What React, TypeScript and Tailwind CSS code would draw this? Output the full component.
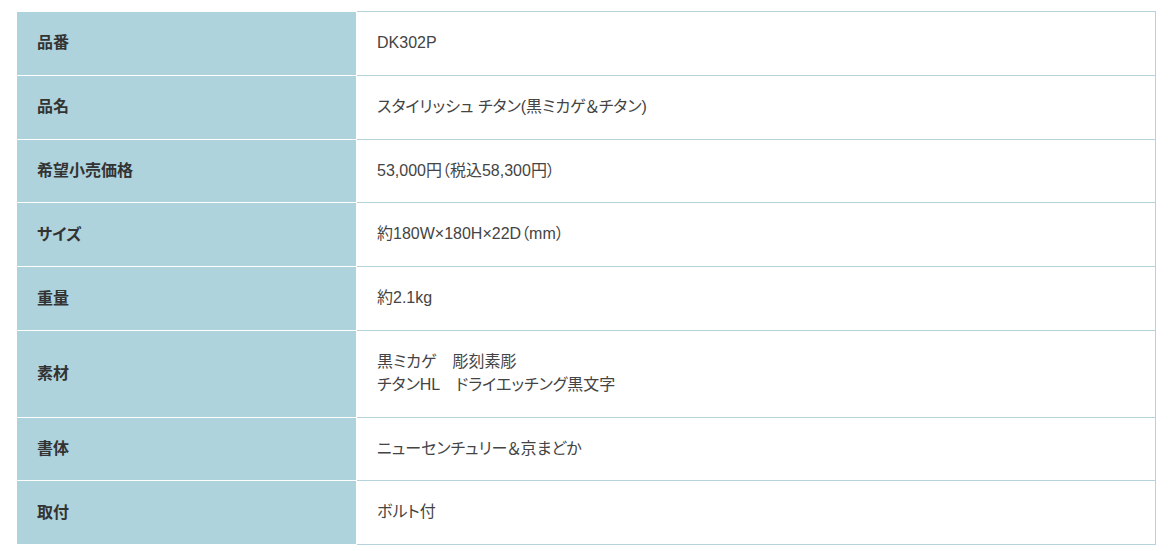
const rows: { label: string; value: string[] }[] = [
  { label: '品番', value: ['DK302P'] },
  { label: '品名', value: ['スタイリッシュ チタン(黒ミカゲ＆チタン)'] },
  { label: '希望小売価格', value: ['53,000円（税込58,300円）'] },
  { label: 'サイズ', value: ['約180W×180H×22D（mm）'] },
  { label: '重量', value: ['約2.1kg'] },
  { label: '素材', value: ['黒ミカゲ　彫刻素彫', 'チタンHL　ドライエッチング黒文字'] },
  { label: '書体', value: ['ニューセンチュリー＆京まどか'] },
  { label: '取付', value: ['ボルト付'] },
];

export default function App() {
  return (
    <div
      className="min-h-[551px] bg-white pl-[17px] pr-[15px] pt-[11px] [font-feature-settings:'palt']"
      style={{ fontFamily: '"Liberation Sans", "Noto Sans CJK JP", sans-serif' }}
    >
      <div className="flex flex-col">
        {rows.map((row, i) => (
          <div key={row.label} className="flex">
            <div
              className={`flex w-[340px] shrink-0 items-center border-b border-r border-white bg-[#afd3dc] px-5 text-[16px] font-bold text-[#333] ${
                i === 0 ? 'border-t' : ''
              }`}
            >
              {row.label}
            </div>
            <div
              className={`flex flex-1 flex-col justify-center border-b border-r border-[#b4d3db] px-5 py-5 text-[16px] leading-[22.8px] text-[#444] ${
                i === 0 ? 'border-t' : ''
              }`}
            >
              {row.value.map((v) => (
                <div key={v}>{v}</div>
              ))}
            </div>
          </div>
        ))}
      </div>
    </div>
  );
}
